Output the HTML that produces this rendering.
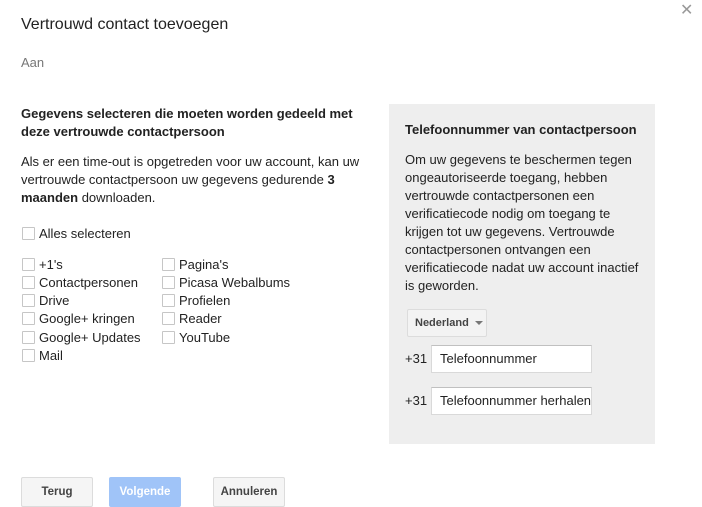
<!DOCTYPE html>
<html><head><meta charset="utf-8"><style>
*{margin:0;padding:0;box-sizing:border-box}
body{width:702px;height:506px;background:#fff;font-family:"Liberation Sans",Arial,sans-serif;font-size:13px;color:#222;position:relative;overflow:hidden}
.a{position:absolute;white-space:nowrap}
.cb{position:absolute;width:13px;height:13px;border:1px solid #c6c6c6;border-radius:1px;background:#fff}
.p{line-height:18px}
.btn{position:absolute;top:477px;height:30px;width:72px;border:1px solid #dcdcdc;border-radius:2px;background:#f5f5f5;font-weight:bold;font-size:11.5px;color:#444;text-align:center;line-height:28px}
.inp{position:absolute;left:431px;width:161px;height:28px;border:1px solid #d9d9d9;border-top-color:#c0c0c0;background:#fff;font-size:13px;line-height:26px;padding-left:8px;overflow:hidden;white-space:nowrap}
</style></head><body>
<div class="a" style="left:680px;top:0px;font-size:16px;color:#999">✕</div>
<div class="a" style="left:21px;top:16px;font-size:16px;color:#222">Vertrouwd contact toevoegen</div>
<div class="a" style="left:21px;top:55px;color:#777">Aan</div>

<div class="a p" style="left:21px;top:105px;font-weight:bold">Gegevens selecteren die moeten worden gedeeld met<br>deze vertrouwde contactpersoon</div>
<div class="a p" style="left:21px;top:153px">Als er een time-out is opgetreden voor uw account, kan uw<br>vertrouwde contactpersoon uw gegevens gedurende <b>3</b><br><b>maanden</b> downloaden.</div>

<div class="cb" style="left:22px;top:227px"></div><div class="a" style="left:39px;top:226px">Alles selecteren</div>

<div class="cb" style="left:22px;top:258px"></div><div class="a" style="left:39px;top:257px">+1's</div>
<div class="cb" style="left:22px;top:276px"></div><div class="a" style="left:39px;top:275px">Contactpersonen</div>
<div class="cb" style="left:22px;top:294px"></div><div class="a" style="left:39px;top:293px">Drive</div>
<div class="cb" style="left:22px;top:312px"></div><div class="a" style="left:39px;top:311px">Google+ kringen</div>
<div class="cb" style="left:22px;top:331px"></div><div class="a" style="left:39px;top:330px">Google+ Updates</div>
<div class="cb" style="left:22px;top:349px"></div><div class="a" style="left:39px;top:348px">Mail</div>

<div class="cb" style="left:162px;top:258px"></div><div class="a" style="left:179px;top:257px">Pagina's</div>
<div class="cb" style="left:162px;top:276px"></div><div class="a" style="left:179px;top:275px">Picasa Webalbums</div>
<div class="cb" style="left:162px;top:294px"></div><div class="a" style="left:179px;top:293px">Profielen</div>
<div class="cb" style="left:162px;top:312px"></div><div class="a" style="left:179px;top:311px">Reader</div>
<div class="cb" style="left:162px;top:331px"></div><div class="a" style="left:179px;top:330px">YouTube</div>

<div class="a" style="left:389px;top:104px;width:266px;height:340px;background:#eeeeee"></div>
<div class="a" style="left:405px;top:122px;font-weight:bold">Telefoonnummer van contactpersoon</div>
<div class="a p" style="left:405px;top:151px">Om uw gegevens te beschermen tegen<br>ongeautoriseerde toegang, hebben<br>vertrouwde contactpersonen een<br>verificatiecode nodig om toegang te<br>krijgen tot uw gegevens. Vertrouwde<br>contactpersonen ontvangen een<br>verificatiecode nadat uw account inactief<br>is geworden.</div>

<div class="a" style="left:407px;top:309px;width:80px;height:28px;border:1px solid #dcdcdc;border-radius:2px;background:#f3f3f3;font-size:11px;font-weight:bold;color:#444;line-height:26px;padding-left:7px">Nederland <span style="display:inline-block;width:0;height:0;border-left:4px solid transparent;border-right:4px solid transparent;border-top:4px solid #777;vertical-align:middle;margin-left:3px"></span></div>

<div class="a" style="left:405px;top:351px">+31</div>
<div class="inp" style="top:345px">Telefoonnummer</div>
<div class="a" style="left:405px;top:393px">+31</div>
<div class="inp" style="top:387px">Telefoonnummer herhalen</div>

<div class="btn" style="left:21px">Terug</div>
<div class="btn" style="left:109px;background:#a0c4f8;border-color:#a0c4f8;color:#fff">Volgende</div>
<div class="btn" style="left:213px">Annuleren</div>
</body></html>
